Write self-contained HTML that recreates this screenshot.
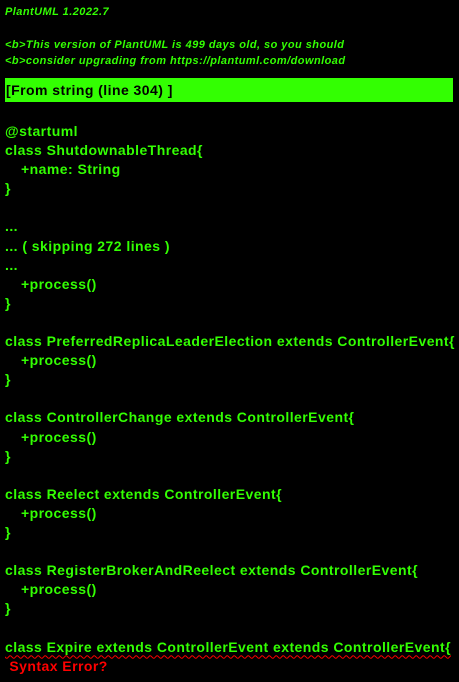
<!DOCTYPE html>
<html><head><style>
html,body{margin:0;padding:0;background:#000;width:459px;height:682px;overflow:hidden}
body{position:relative;font-family:"Liberation Sans",sans-serif}
.h{position:absolute;left:5px;color:#33ff02;font-size:11px;font-weight:bold;font-style:italic;white-space:pre;line-height:13px;letter-spacing:0.45px}
.box{position:absolute;left:5px;top:78px;width:448px;height:24px;background:#33ff02;color:#000;font-weight:bold;font-size:14px;line-height:24px;letter-spacing:0.45px}
.box span{padding-left:1px}
pre{position:absolute;left:5px;top:122px;margin:0;font-family:"Liberation Sans",sans-serif;font-weight:bold;font-size:14px;line-height:19.1px;color:#33ff02;letter-spacing:0.45px}
.i{display:inline-block;width:16px}
.err{text-decoration:underline wavy red;text-underline-offset:3px;text-decoration-thickness:1px}
.se{color:#ff0000}
</style></head><body>
<div class="h" style="top:6px">PlantUML 1.2022.7</div>
<div class="h" style="top:39px">&lt;b&gt;This version of PlantUML is 499 days old, so you should</div>
<div class="h" style="top:55px">&lt;b&gt;consider upgrading from https://plantuml.com/download</div>
<div class="box"><span>[From string (line 304) ]</span></div>
<pre>@startuml
class ShutdownableThread{
<span class="i"></span>+name: String
}

...
... ( skipping 272 lines )
...
<span class="i"></span>+process()
}

class PreferredReplicaLeaderElection extends ControllerEvent{
<span class="i"></span>+process()
}

class ControllerChange extends ControllerEvent{
<span class="i"></span>+process()
}

class Reelect extends ControllerEvent{
<span class="i"></span>+process()
}

class RegisterBrokerAndReelect extends ControllerEvent{
<span class="i"></span>+process()
}

<span class="err">class Expire extends ControllerEvent extends ControllerEvent{</span>
<span class="se"> Syntax Error?</span></pre>
</body></html>
